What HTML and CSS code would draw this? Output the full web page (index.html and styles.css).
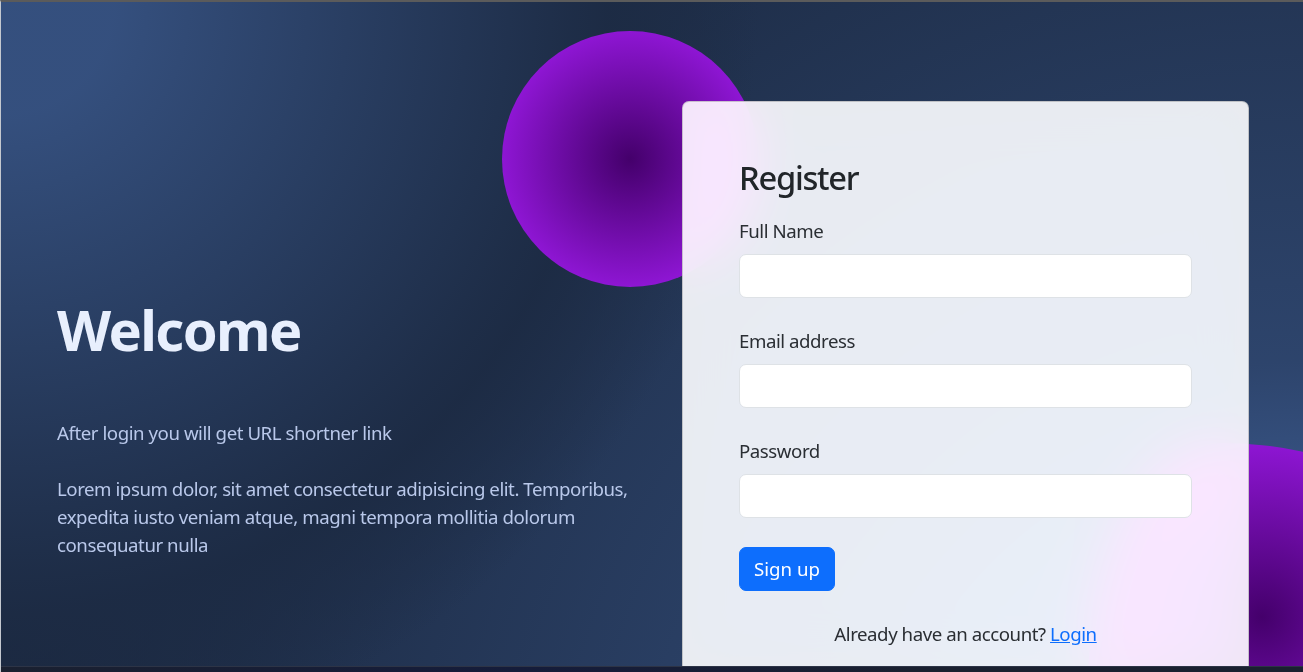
FILE: index.html
```html
<!DOCTYPE html>
<html lang="en">
<head>
<meta charset="utf-8">
<title>Register</title>
<link rel="stylesheet" href="styles.css">
</head>
<body>
<div class="frame">
  <div class="viewport">
    <section class="hero">
      <div class="intro">
        <h1 class="intro-title">Welcome</h1>
        <p class="intro-text">After login you will get URL shortner link</p>
        <p class="intro-text">Lorem ipsum dolor, sit amet consectetur adipisicing elit. Temporibus, expedita iusto veniam atque, magni tempora mollitia dolorum consequatur nulla</p>
      </div>
      <div class="card-wrap">
        <div class="shape shape-1"></div>
        <div class="shape shape-2"></div>
        <div class="card">
          <h3 class="card-title">Register</h3>
          <form class="form">
            <div class="field">
              <label class="label" for="name">Full Name</label>
              <input class="input" id="name" type="text">
            </div>
            <div class="field">
              <label class="label" for="email">Email address</label>
              <input class="input" id="email" type="email">
            </div>
            <div class="field">
              <label class="label" for="password">Password</label>
              <input class="input" id="password" type="password">
            </div>
            <div class="actions">
              <button class="btn" type="button">Sign up</button>
            </div>
            <p class="switch">Already have an account? <a class="link" href="#">Login</a></p>
          </form>
        </div>
      </div>
    </section>
  </div>
  <div class="taskbar"></div>
</div>
</body>
</html>
```
FILE: styles.css
```css
* { box-sizing: border-box; }

html, body {
  margin: 0;
  padding: 0;
  overflow: hidden;
}

body {
  font-family: "Noto Sans", "Open Sans", sans-serif;
  font-size: 18.67px;
  line-height: 28px;
  letter-spacing: -0.45px;
  color: #2a2e33;
}

.frame {
  height: 672px;
  display: flex;
  flex-direction: column;
  border-top: 2px solid #5b5b5b;
  border-left: 1px solid #c4c8cf;
  background: #1b2130;
}

.viewport {
  flex: 1;
  overflow: hidden;
}

.hero {
  height: 870px;
  display: flex;
  align-items: flex-start;
  gap: 35px;
  padding-left: 56px;
  background-color: hsl(218, 41%, 15%);
  background-image:
    radial-gradient(758px circle at 0% 0%, hsl(218, 41%, 35%) 15%, hsl(218, 41%, 30%) 35%, hsl(218, 41%, 20%) 75%, hsl(218, 41%, 19%) 80%, transparent 100%),
    radial-gradient(1458px circle at 100% 100%, hsl(218, 41%, 45%) 15%, hsl(218, 41%, 30%) 35%, hsl(218, 41%, 20%) 75%, hsl(218, 41%, 19%) 80%, transparent 100%);
}

.intro {
  width: 590px;
  padding-top: 294px;
  flex-shrink: 0;
}

.intro-title {
  margin: 0 0 56px;
  font-size: 56px;
  line-height: 67px;
  font-weight: 700;
  letter-spacing: -1.6px;
  color: hsl(218, 81%, 95%);
}

.intro-text {
  margin: 0 0 28px;
  color: #b9c8ea;
}

.card-wrap {
  position: relative;
  width: 567px;
  margin-top: 99px;
  flex-shrink: 0;
}

.shape {
  position: absolute;
  background: radial-gradient(#44006b, #ad1fff);
}

.shape-1 {
  width: 256px;
  height: 256px;
  left: -180px;
  top: -70px;
  border-radius: 50%;
}

.shape-2 {
  width: 348px;
  height: 348px;
  left: 406px;
  top: 342px;
  border-radius: 38% 62% 63% 37% / 70% 33% 67% 30%;
}

.card {
  position: relative;
  padding: 56px 56px;
  background-color: hsla(0, 0%, 100%, 0.9);
  backdrop-filter: saturate(200%) blur(25px);
  border: 1px solid rgba(0, 0, 0, 0.175);
  border-radius: 7px;
}

.card-title {
  margin: 0 0 20px;
  font-size: 32.67px;
  line-height: 39px;
  font-weight: 500;
  letter-spacing: -1.25px;
  color: #212529;
}

.form { margin: 0; }

.field { margin-bottom: 29px; }

.label {
  display: block;
  margin-bottom: 9px;
}

.input {
  display: block;
  width: 100%;
  height: 44px;
  padding: 7px 14px;
  font: inherit;
  color: #212529;
  background: #fff;
  border: 1px solid #dee2e6;
  border-radius: 7px;
}

.actions { margin-bottom: 29px; }

.btn {
  font: inherit;
  line-height: 28px;
  padding: 7px 14px;
  color: #fff;
  background: #0d6efd;
  border: 1px solid #0d6efd;
  border-radius: 7px;
}

.switch {
  margin: 0;
  text-align: center;
}

.link { color: #0d6efd; }

.taskbar {
  height: 6px;
  flex-shrink: 0;
  border-top: 1px solid #2d3446;
  background: linear-gradient(90deg, #1a2030 0%, #151c3a 40%, #1a2030 70%, #1a2030 100%);
}
```
